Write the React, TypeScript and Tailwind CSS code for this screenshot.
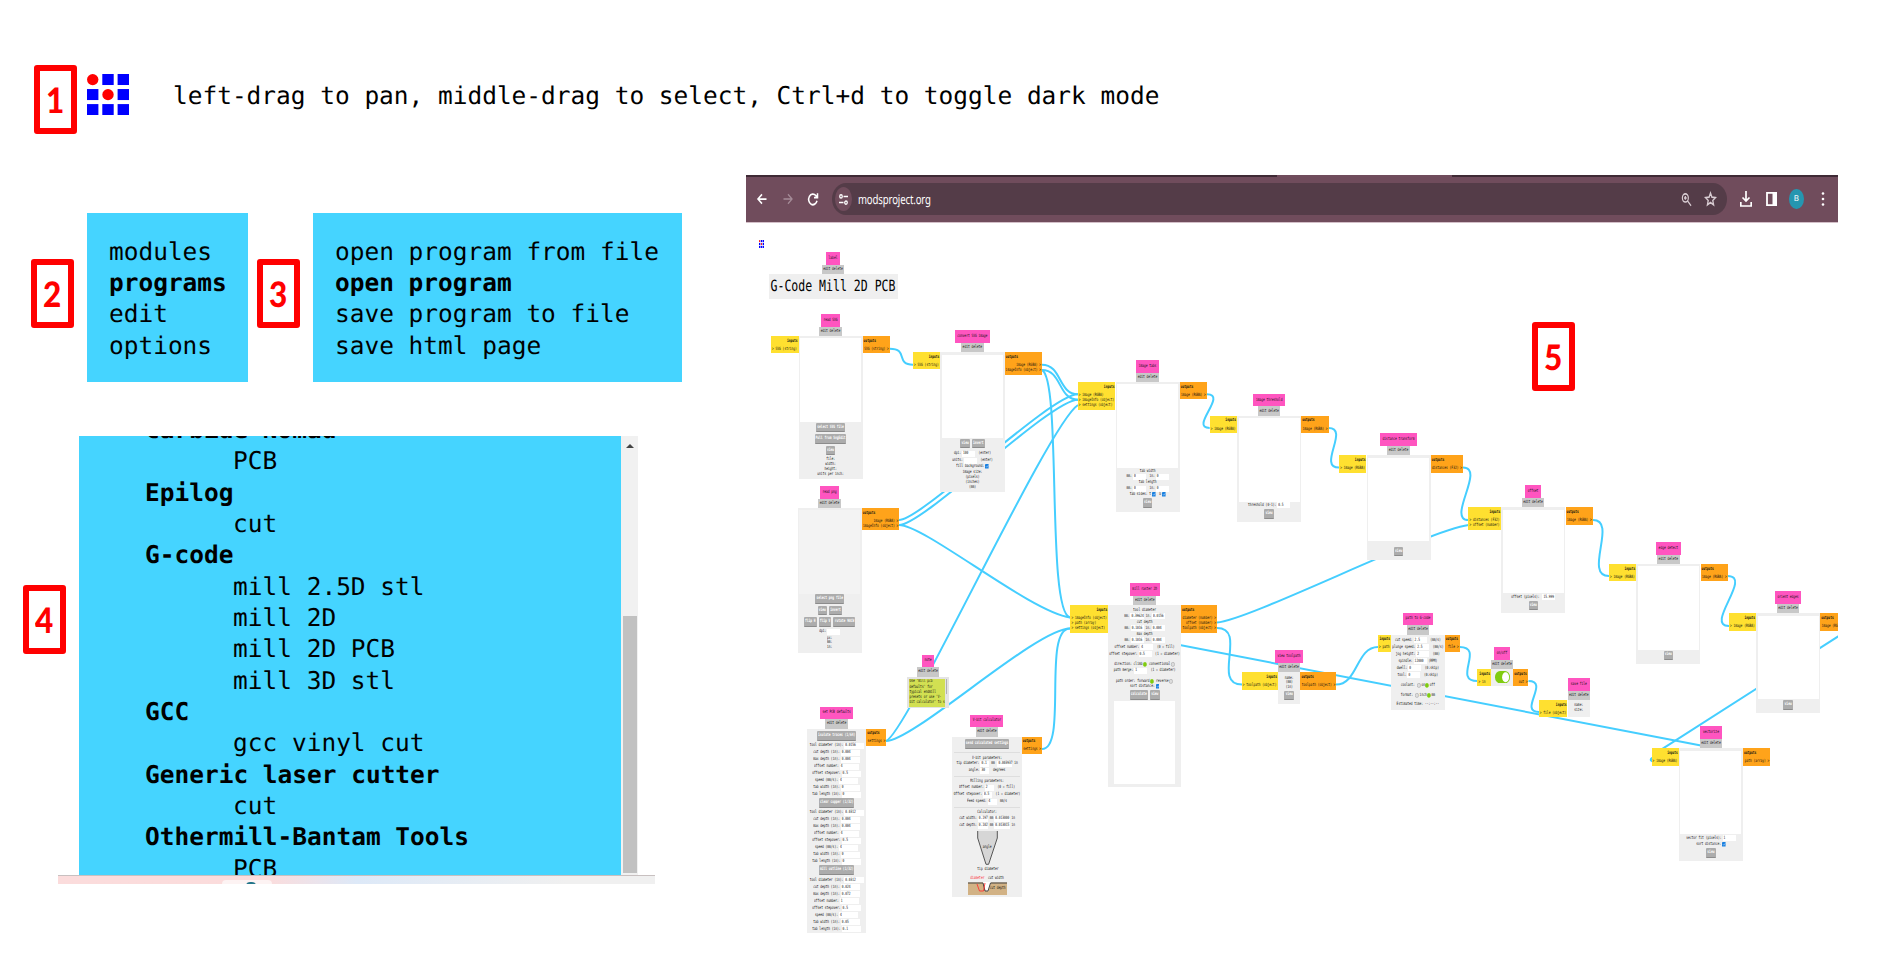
import React from 'react';
import type { ReactNode } from 'react';

const LEFT = 746;
const TOP = 223;

type Item = ReactNode;
type Row = [number, ...Item[]];

function T({ children, bold = false, light = false, red = false }: { children: ReactNode; bold?: boolean; light?: boolean; red?: boolean }) {
  const tone = light ? 'text-white' : red ? 'text-red-500' : 'text-[#111]';
  return (
    <span
      className={`inline-block scale-y-[1.5] whitespace-pre font-["DejaVu_Sans_Mono",monospace] text-[2.95px] leading-none [text-rendering:geometricPrecision] ${tone} ${bold ? 'font-bold' : ''}`}
    >
      {children}
    </span>
  );
}

function Btn({ w, children }: { w: number; children: string }) {
  return (
    <span
      className="mx-[1px] flex h-[9.6px] shrink-0 items-center justify-center rounded-[1px] border-b border-[#8c8c8c] bg-[#acacac]"
      style={{ width: w }}
    >
      <T light bold>{children}</T>
    </span>
  );
}

function Inp({ w = 13, children }: { w?: number; children?: string }) {
  return (
    <span className="ml-[1px] flex h-[6px] shrink-0 items-center bg-white pl-[1px]" style={{ width: w }}>
      <T>{children}</T>
    </span>
  );
}

const Check = () => (
  <svg viewBox="0 0 8 10" preserveAspectRatio="none" className="ml-[1px] h-[4.6px] w-[3.6px] shrink-0">
    <rect width="8" height="10" rx="1" fill="#1a80e0" />
    <path d="M2 5l2 2 3-4" stroke="#fff" strokeWidth="1" fill="none" />
  </svg>
);

const Radio = ({ on = false }: { on?: boolean }) => (
  <svg viewBox="0 0 8 10" preserveAspectRatio="none" className="mx-[0.5px] h-[4.8px] w-[3.8px] shrink-0">
    <ellipse cx="4" cy="5" rx="3.5" ry="4.5" fill={on ? '#80cc10' : '#ddd'} stroke={on ? '#80cc10' : '#999'} />
  </svg>
);

const view = <Btn w={9.6}>view</Btn>;

const Rule = () => <i className="h-[1px] w-[66px] shrink-0 bg-[#dedede]" />;

interface Port {
  x: number;
  w: number;
  lines: string[];
}

interface NodeSpec {
  title: string;
  tx: number;
  tw: number;
  x: number;
  y: number;
  w: number;
  h: number;
  ins?: Port;
  outs?: Port;
  preview?: number;
  faint?: boolean;
  rows?: Row[];
}

const nodes: NodeSpec[] = [
  {
    title: 'read SVG', tx: 821, tw: 19, x: 798.6, y: 336, w: 64, h: 143.3, preview: 338.3,
    ins: { x: 771, w: 27.6, lines: ['> SVG (string)'] }, outs: { x: 862.6, w: 27.3, lines: ['SVG (string) >'] },
    rows: [
      [427.5, <Btn w={28.5}>select SVG file</Btn>], [439, <Btn w={30.5}>Pull from SvgEdit</Btn>], [450.5, view],
      [459, 'file:'], [464.5, 'width:'], [469.3, 'height:'], [474.6, 'units per inch:'],
    ],
  },
  {
    title: 'convert SVG image', tx: 955, tw: 34.7, x: 940.3, y: 352.2, w: 64.4, h: 139.8, preview: 354.7,
    ins: { x: 913, w: 27.3, lines: ['> SVG (string)'] }, outs: { x: 1004.7, w: 37.3, lines: ['image (RGBA) >', 'imageInfo (object) >'] },
    rows: [
      [443.7, view, <Btn w={12.7}>invert</Btn>], [453.7, 'dpi:', <Inp>100</Inp>, '  (enter)'], [460.7, 'units:', <Inp />, '  (enter)'],
      [466.7, 'fill background:', <Check />], [472.3, 'image size:'], [477.3, '(pixels)'], [482.6, '(inches)'], [487.4, '(mm)'],
    ],
  },
  {
    title: 'read png', tx: 820, tw: 19, x: 797.6, y: 508, w: 64.2, h: 144.7, preview: 510.3, faint: true,
    outs: { x: 861.8, w: 37.5, lines: ['image (RGBA) >', 'imageInfo (object) >'] },
    rows: [
      [599, <Btn w={28.5}>select png file</Btn>], [610.5, view, <Btn w={12.7}>invert</Btn>],
      [622, <Btn w={12.8}>flip H</Btn>, <Btn w={12.8}>flip V</Btn>, <Btn w={22}>rotate 90CW</Btn>],
      [631.8, 'dpi:', <Inp />], [638, 'px:'], [642.8, 'mm:'], [648, 'in:'],
    ],
  },
  {
    title: 'set PCB defaults', tx: 820, tw: 33.3, x: 807.3, y: 728.6, w: 58.8, h: 204.4,
    outs: { x: 866.2, w: 20.1, lines: ['settings >'] },
    rows: [
      ...([
        [736, 'isolate traces (1/64)', 39, ['0.0156', '0.004', '0.004', '4', '0.5', '4', '0', '0']],
        [803, 'clear copper (1/32)', 35.5, ['0.0312', '0.004', '0.004', '4', '0.5', '4', '0', '0']],
        [870.3, 'mill outline (1/32)', 35.5, ['0.0312', '0.024', '0.072', '1', '0.5', '4', '0.05', '0.1']],
      ] as [number, string, number, string[]][]).flatMap(([y, label, w, vals]): Row[] => [
        [y, <Btn w={w}>{label}</Btn>],
        ...['tool diameter', 'cut depth', 'max depth', 'offset number', 'offset stepover', 'speed', 'tab width', 'tab length'].map(
          (n, i): Row => [y + 9.8 + i * 7, n + (n.startsWith('offset') ? ':' : n === 'speed' ? ' (mm/s):' : ' (in):'), <Inp w={19.5}>{vals[i]}</Inp>],
        ),
      ]),
    ],
  },
  {
    title: 'V-bit calculator', tx: 970.4, tw: 33, x: 952.4, y: 736.6, w: 69.4, h: 160,
    outs: { x: 1021.8, w: 20.2, lines: ['settings >'] },
    rows: [
      [744, <Btn w={44.5}>send calculated settings</Btn>], [752.5, <Rule />],
      [758.3, 'V-bit parameters:'], [763.8, 'tip diameter:', <Inp w={9}>0.1</Inp>, ' mm ', <Inp w={15}>0.003937</Inp>, ' in'],
      [770.8, 'angle:', <Inp w={9}>30</Inp>, '  degrees'], [777, <Rule />],
      [781.6, 'Milling parameters:'], [788, 'Offset number:', <Inp w={9}>2</Inp>, '  (0 = fill)'],
      [795, 'Offset stepover:', <Inp w={9}>0.5</Inp>, '  (1 = diameter)'], [802, 'Feed speed:', <Inp w={9}>4</Inp>, '  mm/s'],
      [807.5, <Rule />], [812.8, 'Calculator:'],
      [819, 'cut width:', <Inp w={10}>0.197</Inp>, ' mm', <Inp w={15.5}>0.013000</Inp>, ' in'],
      [826, 'cut depth:', <Inp w={10}>0.102</Inp>, ' mm', <Inp w={15.5}>0.013015</Inp>, ' in'],
      [848, <VBit />], [869.8, ' tip diameter'], [878.6, <T red>diameter</T>, '  cut width'], [888.4, <Board />],
    ],
  },
  {
    title: 'image tabs', tx: 1136, tw: 23, x: 1115.5, y: 382, w: 64.3, h: 129.8, preview: 384.3,
    ins: { x: 1077.8, w: 37.7, lines: ['> image (RGBA)', '> imageInfo (object)', '> settings (object)'] },
    outs: { x: 1179.8, w: 27, lines: ['image (RGBA) >'] },
    rows: [
      [471, 'tab width'], [476.5, 'mm:', <Inp>0</Inp>, '  in:', <Inp>0</Inp>], [482.6, 'tab length'],
      [488.8, 'mm:', <Inp>0</Inp>, '  in:', <Inp>0</Inp>], [494.8, 'tab sides: t', <Check />, '  b', <Check />], [503.3, view],
    ],
  },
  {
    title: 'image threshold', tx: 1253.3, tw: 31.7, x: 1237, y: 415.7, w: 64.2, h: 106.6, preview: 418,
    ins: { x: 1209.7, w: 27.3, lines: ['> image (RGBA)'] }, outs: { x: 1301.2, w: 27.4, lines: ['image (RGBA) >'] },
    rows: [[505.3, 'threshold (0-1):', <Inp>0.5</Inp>], [514, view]],
  },
  {
    title: 'distance transform', tx: 1380, tw: 37, x: 1366.5, y: 455.4, w: 64.3, h: 104.6, preview: 457.8,
    ins: { x: 1339.2, w: 27.3, lines: ['> image (RGBA)'] }, outs: { x: 1430.8, w: 32.2, lines: ['distances (F32) >'] },
    rows: [[551.6, view]],
  },
  {
    title: 'offset', tx: 1525, tw: 16, x: 1501.2, y: 507.4, w: 64.3, h: 106, preview: 509.8,
    ins: { x: 1468.4, w: 32.8, lines: ['> distances (F32)', '> offset (number)'] }, outs: { x: 1565.5, w: 27.3, lines: ['image (RGBA) >'] },
    rows: [[597.3, 'offset (pixels): ', <Inp>15.999</Inp>], [605.7, view]],
  },
  {
    title: 'edge detect', tx: 1656, tw: 24.7, x: 1636.2, y: 564, w: 64.3, h: 99.7, preview: 566.3,
    ins: { x: 1609, w: 27.2, lines: ['> image (RGBA)'] }, outs: { x: 1700.5, w: 27.2, lines: ['image (RGBA) >'] },
    rows: [[655.4, view]],
  },
  {
    title: 'orient edges', tx: 1775, tw: 26, x: 1756, y: 613.4, w: 64.3, h: 100, preview: 615.7,
    ins: { x: 1729, w: 27, lines: ['> image (RGBA)'] }, outs: { x: 1820.3, w: 27.2, lines: ['image (RGBA) >'] },
    rows: [[705, view]],
  },
  {
    title: 'vectorize', tx: 1700.3, tw: 21.3, x: 1678.8, y: 748.4, w: 64.2, h: 112.6, preview: 750.8,
    ins: { x: 1651.6, w: 27.2, lines: ['> image (RGBA)'] }, outs: { x: 1743, w: 27.4, lines: ['path (array) >'] },
    rows: [[838, 'vector fit (pixels):', <Inp>1</Inp>], [844.5, 'sort distance:', <Check />], [853, view]],
  },
  {
    title: 'mill raster 2D', tx: 1130, tw: 29.5, x: 1108.2, y: 605.2, w: 72.8, h: 181.6,
    ins: { x: 1070.4, w: 37.8, lines: ['> imageInfo (object)', '> path (array)', '> settings (object)'] },
    outs: { x: 1181, w: 36, lines: ['diameter (number) >', 'offset (number) >', 'toolpath (object) >'] },
    rows: [
      [610.5, 'tool diameter'], [616.3, 'mm:', <Inp w={13.5}>0.39624</Inp>, ' in:', <Inp>0.0156</Inp>], [622.3, 'cut depth'],
      [628.4, 'mm:', <Inp>0.1016</Inp>, ' in:', <Inp>0.004</Inp>], [634.6, 'max depth'], [640.3, 'mm:', <Inp>0.1016</Inp>, ' in:', <Inp>0.004</Inp>],
      [647.4, 'offset number:', <Inp>4</Inp>, '  (0 = fill)'], [654.3, 'offset stepover:', <Inp>0.5</Inp>, '  (1 = diameter)'],
      [664.8, 'direction: climb', <Radio on />, ' conventional', <Radio />], [670.7, 'path merge:', <Inp>1</Inp>, '  (1 = diameter)'],
      [681.2, 'path order: forward', <Radio on />, ' reverse', <Radio />], [686.7, 'sort distance:', <Check />],
      [694.8, <Btn w={18.5}>calculate</Btn>, view], [742.5, <i className="h-[83.5px] w-[61px] shrink-0 bg-white" />],
    ],
  },
  {
    title: 'view toolpath', tx: 1275, tw: 28, x: 1278, y: 672.4, w: 22.4, h: 31.4,
    ins: { x: 1241.8, w: 36.2, lines: ['> toolpath (object)'] }, outs: { x: 1300.4, w: 36, lines: ['toolpath (object) >'] },
    rows: [[678, 'name:'], [682.6, '(mm)'], [687.8, '(in)'], [695.5, view]],
  },
  {
    title: 'path to G-code', tx: 1403.2, tw: 29.6, x: 1391, y: 634.6, w: 53.7, h: 75.3,
    ins: { x: 1378, w: 13, lines: ['> path'] }, outs: { x: 1444.7, w: 15, lines: ['file >'] },
    rows: [
      [640.3, 'cut speed:', <Inp>2.5</Inp>, '  (mm/s)'], [647.3, 'plunge speed:', <Inp>2.5</Inp>, '  (mm/s)'], [654.4, 'jog height:', <Inp>2</Inp>, '  (mm)'],
      [661.3, 'spindle:', <Inp>12000</Inp>, ' (RPM)'], [668.3, 'dwell:', <Inp>0</Inp>, '  (0:skip)'], [675.3, 'tool:', <Inp>0</Inp>, '  (0:skip)'],
      [685.8, 'coolant:', ' ', <Radio />, 'on', <Radio on />, 'off'], [695.3, 'format:', ' ', <Radio />, 'inch', <Radio on />, 'mm'],
      [705, 'Estimated time: --:--:--'],
    ],
  },
  {
    title: 'on/off', tx: 1494, tw: 16, x: 1491, y: 669, w: 22.3, h: 17,
    ins: { x: 1477.4, w: 13.6, lines: ['> in'] }, outs: { x: 1513.3, w: 15.2, lines: ['out >'] },
    rows: [[677.2, <Toggle />]],
  },
  {
    title: 'save file', tx: 1568, tw: 21.6, x: 1567.5, y: 700, w: 22.5, h: 17,
    ins: { x: 1538.8, w: 28.7, lines: ['> file (object)'] },
    rows: [[705, 'name:'], [710, 'size:']],
  },
];

const wires = [
  'M889.7 348.7C909 348.7 895 364.7 913 364.7',
  'M1042 364.7C1062 364.7 1058 394.3 1078 394.3',
  'M1042 370C1062 370 1058 399.7 1078 399.7',
  'M1042 370C1062 380 1046 612 1070 617.5',
  'M899 520C922 520 1050 394.3 1078 394.3',
  'M899 525C924 525 1050 399.7 1078 399.7',
  'M899 525C925 525 1030 612 1070 617.5',
  'M886 741C906 735 1048 424 1078 405',
  'M886 741C914 741 1036 628.5 1070 628.5',
  'M1042 749C1068 749 1042 628.5 1070 628.5',
  'M1207 394.3C1228 394.3 1189 428 1209.7 428',
  'M1328.6 428C1350 428 1317 467.6 1339 467.6',
  'M1463 467.6C1486 467.6 1446 520 1468.5 520',
  'M1217 622.5C1250 620 1428 530 1468.5 525',
  'M1217 628C1248 628 1211 684.6 1242 684.6',
  'M1336 684.6C1358 684.6 1356 647 1378 647',
  'M1459.7 647C1485 647 1452 681 1477.5 681',
  'M1528.5 681C1550 681 1518 712 1539 712',
  'M1593 520C1618 520 1583 576 1609 576',
  'M1727.7 576C1753 576 1704 626 1729 626',
  'M1120 633.5L1710 747.3',
  'M1860 622.5L1660 750.3M1654 757Q1647.5 760 1654 762',
];

function Toggle() {
  return (
    <svg viewBox="0 0 15 12.4" className="h-[12.4px] w-[15px] shrink-0">
      <rect width="15" height="12.4" rx="5" ry="6.2" fill="#80cc10" />
      <ellipse cx="10.6" cy="6.2" rx="3.5" ry="5" fill="#fff" />
    </svg>
  );
}

function VBit() {
  return (
    <span className="relative flex h-[34px] w-[21px] shrink-0 items-center justify-center">
      <svg viewBox="0 0 21 34" className="absolute inset-0 h-full w-full">
        <path d="M.7 0V7L9 33.3h2.6L20.3 7V0z" fill="#d6d6d6" />
        <path d="M.7 0V7L9 33.3h2.6L20.3 7V0" fill="none" stroke="#555" />
      </svg>
      <span className="relative flex"><T>angle</T></span>
    </span>
  );
}

function Board() {
  return (
    <span className="relative flex h-[13px] w-[39px] shrink-0 items-center justify-end">
      <svg viewBox="0 0 39 13" className="absolute inset-0 h-full w-full">
        <path d="M0 .5h39V13H0z" fill="#d2b285" />
        <path d="M15 0l2.5 9h3L23 0z" fill="#fff" />
        <path d="M0 1h15l2 8h3l2.5-8H39" fill="none" stroke="#444" />
        <path d="M9 2l2.5 7h4L17 1" fill="none" stroke="#f33" strokeWidth=".9" />
      </svg>
      <span className="relative flex pr-[1px]"><T>cut depth</T></span>
    </span>
  );
}

function Ports({ port, y, out }: { port: Port; y: number; out?: boolean }) {
  const h = 12 + port.lines.length * 5.2;
  return (
    <div
      className={`absolute flex flex-col px-[1px] pt-[3.2px] ${out ? 'bg-[#ffa31a]' : 'bg-[#ffe030]'}`}
      style={{ left: port.x - LEFT, top: y - TOP, width: port.w, height: h }}
    >
      <div className={`mb-[4px] flex h-[3.6px] items-center ${out ? '' : 'justify-end'}`}><T bold>{out ? 'outputs' : 'inputs'}</T></div>
      {port.lines.map((l) => (
        <div key={l} className={`flex h-[5.2px] items-center ${out ? 'justify-end' : ''}`}><T>{l}</T></div>
      ))}
    </div>
  );
}

function Header({ title, tx, tw, cx, y }: { title: string; tx: number; tw: number; cx: number; y: number }) {
  return (
    <>
      <div className="absolute flex h-[12.6px] items-center justify-center bg-[#ff55c0]" style={{ left: tx - LEFT, top: y - 22 - TOP, width: tw }}>
        <T>{title}</T>
      </div>
      <div className="absolute flex h-[9.6px] w-[22.6px] items-center justify-center bg-[#c8c8c8]" style={{ left: cx - 11.3 - LEFT, top: y - 9.5 - TOP }}>
        <T>edit delete</T>
      </div>
    </>
  );
}

function NodeView({ n }: { n: NodeSpec }) {
  let cursor = n.y;
  return (
    <>
      <Header title={n.title} tx={n.tx} tw={n.tw} cx={n.tx + n.tw / 2} y={n.y} />
      {n.ins && <Ports port={n.ins} y={n.y} />}
      {n.outs && <Ports port={n.outs} y={n.y} out />}
      <div className="absolute bg-[#efefef]" style={{ left: n.x - LEFT, top: n.y - TOP, width: n.w, height: n.h }}>
        {n.preview && (
          <div className={`absolute inset-x-[1.6px] h-[83.7px] ${n.faint ? 'bg-[#f3f3f3]' : 'bg-white'}`} style={{ top: n.preview - n.y }} />
        )}
        <div className="relative flex flex-col">
          {n.rows?.map(([c, ...items], i) => {
            const gap = c - 1.5 - cursor;
            cursor = c + 1.5;
            return (
              <div key={i} className="flex h-[3px] items-center justify-center" style={{ marginTop: gap }}>
                {items.map((it, j) => (typeof it === 'string' ? <T key={j}>{it}</T> : <React.Fragment key={j}>{it}</React.Fragment>))}
              </div>
            );
          })}
        </div>
      </div>
    </>
  );
}

function Logo({ className }: { className: string }) {
  return (
    <svg viewBox="0 0 42 42" preserveAspectRatio="none" className={className}>
      {[0, 15.3, 30.6].map((y, r) =>
        [0, 15.3, 30.6].map((x, c) =>
          r === c && r < 2 ? (
            <circle key={x} cx={x + 5.7} cy={y + 5.7} r="5.7" fill="#f00" />
          ) : (
            <rect key={x} x={x} y={y} width="11.4" height="11.2" fill="#00f" />
          ),
        ),
      )}
    </svg>
  );
}

function Callout({ n, className = '' }: { n: number; className?: string }) {
  return (
    <div className={`flex h-[69px] w-[43px] shrink-0 items-center justify-center rounded-[3px] border-6 border-[#f00] bg-white ${className}`}>
      <span className='inline-block scale-x-[0.9] pt-px font-[Lato,sans-serif] text-[35px] leading-none font-black text-[#f00]'>{n}</span>
    </div>
  );
}

function Menu({ items, className }: { items: string[]; className: string }) {
  return (
    <div className={`h-[169px] bg-[#45d4ff] px-[22px] pt-[22.3px] ${className}`}>
      {items.map((it, i) => (
        <div key={it} className={`h-[31.4px] whitespace-pre ${i === 1 ? 'font-bold' : ''}`}>{it}</div>
      ))}
    </div>
  );
}

const programs = [
  'Carbide Nomad', '  PCB', 'Epilog', '  cut', 'G-code', '  mill 2.5D stl', '  mill 2D', '  mill 2D PCB', '  mill 3D stl',
  'GCC', '  gcc vinyl cut', 'Generic laser cutter', '  cut', 'Othermill-Bantam Tools', '  PCB',
];

function Toolbar() {
  return (
    <div className="flex h-[48px] flex-col border-b border-[#d3bfc8] bg-[#704c5c]">
      <div className="flex h-[1.5px] shrink-0 justify-between">
        <div className="w-[531px] bg-[#3f2a35]" />
        <div className="w-[386px] bg-[#3f2a35]" />
      </div>
      <div className="flex h-[45px] items-center">
        <svg viewBox="0 0 24 24" preserveAspectRatio="none" className="ml-[10px] h-[14px] w-[12px]" fill="none" stroke="#fff" strokeWidth="3"><path d="M21 12H4M12 4l-8 8 8 8" /></svg>
        <svg viewBox="0 0 24 24" preserveAspectRatio="none" className="ml-[14px] h-[14px] w-[12px]" fill="none" stroke="#a58c98" strokeWidth="2.5"><path d="M3 12h17M12 4l8 8-8 8" /></svg>
        <svg viewBox="0 0 24 24" preserveAspectRatio="none" className="ml-[13px] h-[15px] w-[12px]" fill="none" stroke="#fff" strokeWidth="3"><path d="M20 14a8.5 8.5 0 1 1-2.3-8.2L20 8M21 2v7h-7" /></svg>
        <div className="ml-[13px] flex h-[32.5px] w-[895px] items-center rounded-[14px/16px] bg-[#543c48] pl-[3px]">
          <div className="flex h-[24px] w-[17px] items-center justify-center rounded-[50%] bg-[#704c5c]">
            <svg viewBox="0 0 18 18" preserveAspectRatio="none" className="h-[11px] w-[9px]" fill="none" stroke="#fff" strokeWidth="2.4"><circle cx="4" cy="4" r="2.6" /><path d="M9 4h9M0 14h9" /><circle cx="14" cy="14" r="2.6" /></svg>
          </div>
          <span className='ml-[6px] w-[73px] origin-left scale-x-[0.74] pt-[1px] font-["Noto_Sans",sans-serif] text-[13px] leading-none tracking-[-0.2px] text-white'>modsproject.org</span>
          <svg viewBox="0 0 24 24" preserveAspectRatio="none" className="mr-[12px] ml-auto h-[15px] w-[11px]" fill="none" stroke="#d8ccd2" strokeWidth="2.6"><circle cx="9.5" cy="9.5" r="6.5" /><path d="M14 14l8 8M6.5 9.5h6M9.5 6.5v6" /></svg>
          <svg viewBox="0 0 24 24" preserveAspectRatio="none" className="mr-[10px] h-[16px] w-[13px]" fill="none" stroke="#d8ccd2" strokeWidth="2.4"><path d="M12 3l2.6 6.2 6.7.6-5.1 4.4 1.500 6.600-5.700-3.500-5.700 3.500 1.500-6.600-5.100-4.400 6.700-.6z" /></svg>
        </div>
        <svg viewBox="0 0 12 16" preserveAspectRatio="none" className="ml-[13px] h-[16px] w-[12px]" fill="none" stroke="#fff" strokeWidth="1.7"><path d="M6 0v10M2.5 6.5L6 10l3.5-3.5M.8 11v4h10.4v-4" /></svg>
        <svg viewBox="0 0 11 15" preserveAspectRatio="none" className="ml-[14px] h-[14px] w-[11px]"><path d="M1 1h9v13H1z" fill="none" stroke="#fff" strokeWidth="1.8" /><path d="M6.500 0H11v15H6.500z" fill="#fff" /></svg>
        <div className='ml-[12px] flex h-[20px] w-[14.5px] items-center justify-center rounded-[50%] bg-[#2596b0] font-["Noto_Sans",sans-serif] text-[8px] text-white'>B</div>
        <svg viewBox="0 0 4 16" className="ml-[17px] h-[16px] w-[4px]" fill="#fff"><circle cx="2" cy="2.5" r="1.3" /><circle cx="2" cy="8" r="1.3" /><circle cx="2" cy="13.5" r="1.3" /></svg>
      </div>
    </div>
  );
}

function Canvas() {
  return (
    <div className="relative h-[712px] overflow-hidden bg-white">
      <svg className="absolute inset-0 h-full w-full" viewBox="746 223 1092 712" fill="none" stroke="#45ceff" strokeWidth="2">
        {wires.map((d) => <path key={d} d={d} />)}
      </svg>
      <Logo className="absolute top-[17px] left-[13px] h-[8px] w-[5px]" />
      <Header title="label" tx={826} tw={14} cx={833} y={274} />
      <div className="absolute top-[51px] left-[22.5px] flex h-[25px] w-[129px] items-center justify-center bg-[#efefef]">
        <span className='inline-block scale-y-[1.35] pt-px font-["DejaVu_Sans_Mono",monospace] text-[11.54px] leading-none whitespace-pre text-black [text-rendering:geometricPrecision]'>G-Code Mill 2D PCB</span>
      </div>
      {nodes.map((n) => <NodeView key={n.title} n={n} />)}
      <Header title="note" tx={922} tw={12} cx={928} y={676.6} />
      <div className="absolute top-[454px] left-[161px] flex h-[31px] w-[41.7px] bg-[#e4e4e4] p-[1.5px]">
        <div className="flex w-[37px] flex-col gap-[2.35px] overflow-hidden bg-[#d2e052] pt-[2px] pl-[1px]">
          {["Use 'mill pcb", "defaults' for", 'typical endmill', "presets or use 'V-", "bit calculator' to s"].map((l) => (
            <div key={l} className="flex h-[2.9px] shrink-0 items-center"><T>{l}</T></div>
          ))}
        </div>
        <div className="ml-[0.5px] h-[15px] w-[1.6px] bg-[#b0b0b0]" />
      </div>
      <Callout n={5} className="absolute top-[99px] left-[786px]" />
    </div>
  );
}

export default function App() {
  return (
    <div className='flex h-[968px] w-[1891px] overflow-hidden bg-white font-["DejaVu_Sans_Mono",monospace] text-[24.46px] leading-[31.4px] text-black [text-rendering:geometricPrecision]'>
      <div className="flex w-[746px] shrink-0 flex-col pt-[65px]">
        <div className="flex h-[69px] pl-[34px]">
          <Callout n={1} />
          <Logo className="mt-[8.7px] ml-[10px] h-[41.3px] w-[42px] shrink-0" />
          <div className="z-10 mt-[15px] ml-[44px] shrink-0 whitespace-pre">left-drag to pan, middle-drag to select, Ctrl+d to toggle dark mode</div>
        </div>
        <div className="mt-[79.3px] flex pl-[31px]">
          <Callout n={2} className="mt-[46px]" />
          <Menu className="ml-[13px] w-[161px]" items={['modules', 'programs', 'edit', 'options']} />
          <Callout n={3} className="mt-[46px] ml-[9px]" />
          <Menu className="ml-[13px] w-[368.5px]" items={['open program from file', 'open program', 'save program to file', 'save html page']} />
        </div>
        <div className="mt-[54.2px] flex h-[438.5px] pl-[23px]">
          <Callout n={4} className="mt-[149px]" />
          <div className="ml-[13.3px] w-[542.2px] shrink-0 overflow-hidden bg-[#45d4ff] pl-[65.8px]">
            <div className="-mt-[22.6px]">
              {programs.map((p, i) => (
                <div key={i} className={`h-[31.35px] whitespace-pre ${p.startsWith(' ') ? 'pl-[88px]' : 'font-bold'}`}>{p.trim()}</div>
              ))}
            </div>
          </div>
          <div className="flex w-[17px] shrink-0 flex-col items-center bg-[#f1f1f1]">
            <svg viewBox="0 0 8 4" className="mt-[8px] h-[4px] w-[8px] shrink-0"><path d="M0 4L4 0l4 4z" fill="#444" /></svg>
            <div className="mt-[167.5px] h-[257px] w-[13.5px] shrink-0 bg-[#c1c1c1]" />
          </div>
        </div>
        <div className="ml-[58px] flex h-[9px] w-[597px] overflow-hidden border-t border-[#c8c0c0] bg-linear-to-r from-[#fbdcdc] from-35% via-[#dde9f8] via-50% to-[#f0f0f0] to-85%">
          <div className="mt-[4.5px] ml-[164px] flex h-[4px] w-[50px] justify-center rounded-t bg-[#fdf3f3]">
            <div className="mt-[2px] ml-[8px] h-[4px] w-[10px] rounded-t-full bg-[#23758a]" />
          </div>
        </div>
      </div>
      <div className="w-[1092px] shrink-0 pt-[175px]">
        <Toolbar />
        <Canvas />
      </div>
    </div>
  );
}
